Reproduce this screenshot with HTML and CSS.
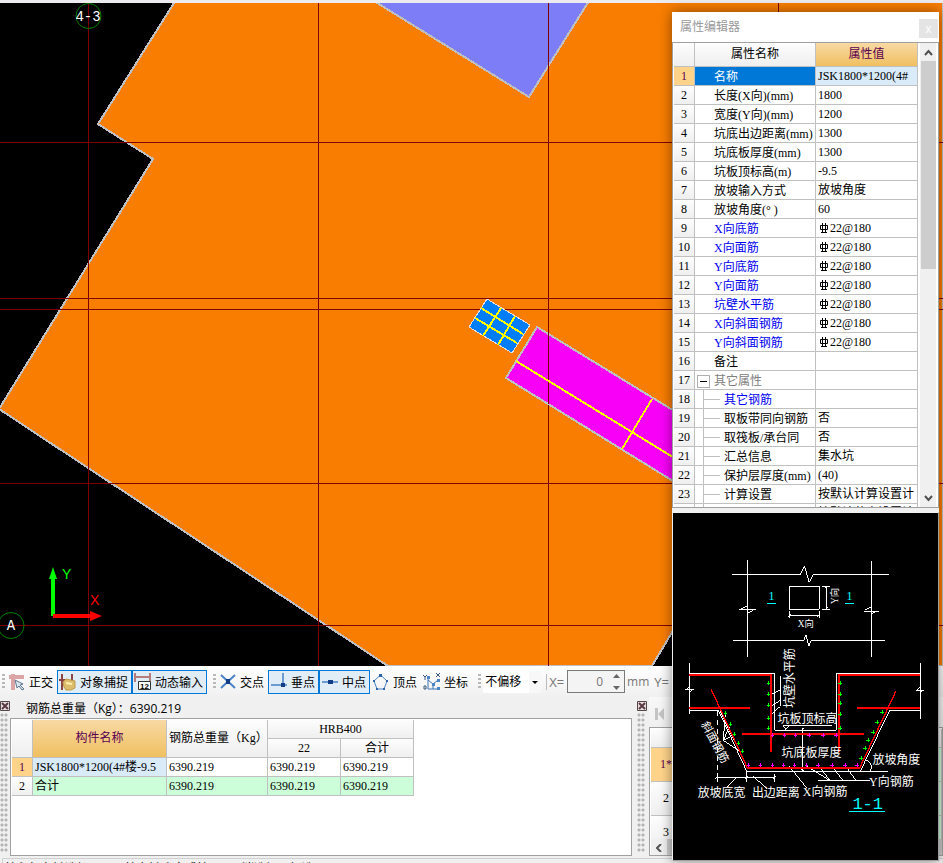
FILE: index.html
```html
<!DOCTYPE html>
<html lang="zh-CN">
<head>
    <meta charset="UTF-8">
    <meta name="viewport" content="width=device-width, initial-scale=1.0">
    <title>属性编辑器</title>
    <link rel="stylesheet" href="styles.css">
</head>
<body>
    <svg width="0" height="0" class="defs">
        <symbol id="rebar" viewBox="0 0 10 10">
            <path d="M1.5 2.5h7v4h-7zM3.500 0v9M6.500 0v9M2 9.500h6" fill="none" stroke="#000"/>
        </symbol>
        <symbol id="close" viewBox="0 0 10 10">
            <path d="M.5.5h9v9h-9z" fill="#e8dede" stroke="#52484c"/>
            <path d="M2 2l6 6M8 2L2 8" stroke="#5a3a42" stroke-width="2"/>
        </symbol>
    </svg>

    <div class="page">
        <div class="canvas">
            <svg class="plan" viewBox="0 3 943 663" preserveAspectRatio="xMinYMin slice">
                <polygon class="slab" points="174,3 98,124 153,159 -1,409 388,666 652,666 690,602 720,666 943,666 943,-2 174,-2"/>
                <polygon class="pit" points="374,1 529,97 589,1"/>
                <!-- axis grid -->
                <path class="axis" d="M88.500 3V666M318.500 3V666M548.500 3V666M778.500 3V666M0 142.500H943M0 298.500H943M0 309.500H943M0 483.500H943M0 625.500H943"/>
                <!-- selected sump -->
                <polygon class="sump" points="487,299 530,325 512,353 469,327"/>
                <path class="mesh" d="M501 308L483 336M515 316L498 345M481 308L523 334M475 318L517 343"/>
                <polygon class="trench" points="537,327 720,439 720,510 506,378"/>
                <path class="axis" d="M548.500 325V404"/>
                <path class="mesh" d="M516 361L720 486M652 399L622 449"/>
                <circle class="bubble" cx="88.500" cy="16" r="12.500"/>
                <text class="bubble-text" x="88" y="21">4-3</text>
                <circle class="bubble" cx="11" cy="625.500" r="13"/>
                <text class="bubble-text" x="11" y="630">A</text>
                <!-- coordinate arrows -->
                <path fill="#00ff00" d="M53 567l4 12h-2v37h-4v-37h-2z"/>
                <path fill="#ff0000" d="M102 616l-12 5v-3H53v-4h37v-3z"/>
                <text class="dir dir-y" x="62" y="579">Y</text>
                <text class="dir dir-x" x="90" y="605">X</text>
            </svg>
        </div>

        <div class="toolbar">
            <span class="grip"></span>
            <button class="tool">
                <svg width="18" height="18"><path d="M1 4h15M5 1v16" stroke="#dba5a5" stroke-width="4"/><path d="M7 7l8 4-3 1 4 4-2 1-3-4-2 2z" fill="#d8e4ee" stroke="#607890"/></svg>
                正交
            </button>
            <button class="tool on">
                <svg width="18" height="18"><path d="M3 1v16M13 1v9M0 7h8" stroke="#8b4545" stroke-width="2"/><path d="M4 9l3-3 9 2v7l-4 2H7l-2-3z" fill="#dcbd6b" stroke="#c09a48"/><path d="M7 10l6 1" stroke="#fff0b0" stroke-width="2"/></svg>
                对象捕捉
            </button>
            <button class="tool on">
                <svg width="18" height="18"><path d="M1 0v9M16 0v9M1 4h15" fill="none" stroke="#b77d7d" stroke-width="2"/><path d="M4.500 8.500h12v8h-12z" fill="#fff" stroke="#333"/><text x="6" y="16" class="tiny">12</text></svg>
                动态输入
            </button>
            <span class="grip wide"></span>
            <button class="tool">
                <svg width="18" height="18"><path d="M2 2l14 13M16 2L2 15" stroke="#4b84c4" stroke-width="2"/><path d="M7 6h4v5H7z" fill="#123c85"/></svg>
                交点
            </button>
            <button class="tool on">
                <svg width="18" height="18"><path d="M1 12h16M13 0v14" stroke="#6b9bd0" stroke-width="2"/><path d="M11 10h4v4h-4z" fill="#123c85"/></svg>
                垂点
            </button>
            <button class="tool on">
                <svg width="18" height="18"><path d="M1 9h16" stroke="#6b9bd0" stroke-width="2"/><path d="M7 7h5v4H7z" fill="#123c85"/></svg>
                中点
            </button>
            <button class="tool">
                <svg width="18" height="18"><path d="M8.500 2L15 8l-3 8H5L2 8z" fill="none" stroke="#4b84c4"/><path d="M7 1h3v3H7zM1 7h2v2H1zM14 7h2v2h-2zM4 15h2v2H4zM11 15h2v2h-2z" fill="#2f65a8"/></svg>
                顶点
            </button>
            <button class="tool">
                <svg width="18" height="18"><path d="M5 4v12h11M5 7l5 4 5-4M10 11v5" fill="none" stroke="#3b74b8"/><path d="M0 2l2 2 2-2M2 4v3M13 0l4 4M17 0l-4 4M1 13h2v3H1z" fill="none" stroke="#39587c"/><path d="M4 3h3v3H4zM9 10h3v3H9zM14 6h3v3h-3zM14 14h3v3h-3z" fill="#4b84c4"/></svg>
                坐标
            </button>
            <span class="grip wide"></span>
            <label class="picker">
                <select aria-label="偏移方式"><option>不偏移</option></select>
            </label>
            <span class="rule"></span>
            <label class="offset" for="offset-x">X=</label>
            <span class="spin">
                <input type="text" id="offset-x" value="0">
                <svg width="7" height="16"><path d="M0 4l3.500-4L7 4zM0 12h7l-3.500 4z" fill="#666"/></svg>
            </span>
            <span class="unit">mm</span>
            <label class="offset" for="offset-y">Y=</label>
            <span class="spin"><input type="text" id="offset-y" value="0"></span>
        </div>

        <div class="docks">
            <div class="handle">
                <svg width="10" height="10"><use href="#close"/></svg>
                <div class="dots"></div>
            </div>
            <div class="summary">
                <p class="total">钢筋总重量（Kg）：6390.219</p>
                <div class="sheet">
                    <table class="grid weights">
                        <colgroup><col class="w-no"><col class="w-name"><col class="w-sum"><col class="w-22"><col class="w-all"></colgroup>
                        <tr>
                            <th rowspan="2"></th>
                            <th rowspan="2" class="picked">构件名称</th>
                            <th rowspan="2" class="sum">钢筋总重量（Kg）</th>
                            <th colspan="2">HRB400</th>
                        </tr>
                        <tr><th>22</th><th>合计</th></tr>
                        <tr><th class="current">1</th><td class="active">JSK1800*1200(4#楼-9.5</td><td>6390.219</td><td>6390.219</td><td>6390.219</td></tr>
                        <tr class="sum-row"><th>2</th><td>合计</td><td>6390.219</td><td>6390.219</td><td>6390.219</td></tr>
                    </table>
                </div>
            </div>
            <div class="handle second">
                <svg width="10" height="10"><use href="#close"/></svg>
                <div class="dots"></div>
            </div>
            <div class="records">
                <div class="nav">
                    <button class="first" aria-label="首条"><svg width="10" height="12"><path d="M0 0h3v12H0zM9 0v12L3 6z" fill="#c4c4c4"/></svg></button>
                </div>
                <div class="sheet">
                    <table class="grid rows">
                        <colgroup><col class="w-row"><col></colgroup>
                        <tr class="head"><th></th><th></th></tr>
                        <tr><th class="current">1*</th><td></td></tr>
                        <tr><th>2</th><td></td></tr>
                        <tr><th>3</th><td></td></tr>
                    </table>
                    <div class="hscroll"><svg width="6" height="8"><path d="M5 0L1 4l4 4" fill="none" stroke="#555" stroke-width="2"/></svg><span></span></div>
                </div>
            </div>
        </div>
        <div class="status">按鼠标左键选择图元，按右键确定或按ESC取消选择；框选图元</div>
    </div>

    <div class="floating">
        <section class="window props">
            <header class="title">
                <h1>属性编辑器</h1>
                <button class="shut">x</button>
            </header>
            <div class="body">
                <div class="clip">
                    <table class="grid">
                        <colgroup><col class="w-idx"><col class="w-prop"><col></colgroup>
                        <tr class="head"><th></th><th>属性名称</th><th class="picked">属性值</th></tr>
                        <tr><th class="current">1</th><td class="name selected">名称</td><td class="active">JSK1800*1200(4#</td></tr>
                        <tr><th>2</th><td class="name">长度(X向)(mm)</td><td>1800</td></tr>
                        <tr><th>3</th><td class="name">宽度(Y向)(mm)</td><td>1200</td></tr>
                        <tr><th>4</th><td class="name">坑底出边距离(mm)</td><td>1300</td></tr>
                        <tr><th>5</th><td class="name">坑底板厚度(mm)</td><td>1300</td></tr>
                        <tr><th>6</th><td class="name">坑板顶标高(m)</td><td>-9.5</td></tr>
                        <tr><th>7</th><td class="name">放坡输入方式</td><td>放坡角度</td></tr>
                        <tr><th>8</th><td class="name">放坡角度(° )</td><td>60</td></tr>
                        <tr><th>9</th><td class="name steel">X向底筋</td><td><svg class="bar"><use href="#rebar"/></svg>22@180</td></tr>
                        <tr><th>10</th><td class="name steel">X向面筋</td><td><svg class="bar"><use href="#rebar"/></svg>22@180</td></tr>
                        <tr><th>11</th><td class="name steel">Y向底筋</td><td><svg class="bar"><use href="#rebar"/></svg>22@180</td></tr>
                        <tr><th>12</th><td class="name steel">Y向面筋</td><td><svg class="bar"><use href="#rebar"/></svg>22@180</td></tr>
                        <tr><th>13</th><td class="name steel">坑壁水平筋</td><td><svg class="bar"><use href="#rebar"/></svg>22@180</td></tr>
                        <tr><th>14</th><td class="name steel">X向斜面钢筋</td><td><svg class="bar"><use href="#rebar"/></svg>22@180</td></tr>
                        <tr><th>15</th><td class="name steel">Y向斜面钢筋</td><td><svg class="bar"><use href="#rebar"/></svg>22@180</td></tr>
                        <tr><th>16</th><td class="name">备注</td><td></td></tr>
                        <tr><th>17</th><td class="name group"><button class="fold" aria-label="折叠"></button>其它属性</td><td></td></tr>
                        <tr><th>18</th><td class="name child steel">其它钢筋</td><td></td></tr>
                        <tr><th>19</th><td class="name child">取板带同向钢筋</td><td>否</td></tr>
                        <tr><th>20</th><td class="name child">取筏板/承台同</td><td>否</td></tr>
                        <tr><th>21</th><td class="name child">汇总信息</td><td>集水坑</td></tr>
                        <tr><th>22</th><td class="name child">保护层厚度(mm)</td><td>(40)</td></tr>
                        <tr><th>23</th><td class="name child">计算设置</td><td>按默认计算设置计</td></tr>
                        <tr><th></th><td class="name child"></td><td>按默认节点设置计</td></tr>
                    </table>
                </div>
                <div class="vscroll">
                    <svg width="9" height="7"><path d="M1 6l3.500-4L8 6" fill="none" stroke="#505050" stroke-width="2"/></svg>
                    <span class="thumb"></span>
                    <svg width="9" height="7"><path d="M1 1l3.500 4L8 1" fill="none" stroke="#505050" stroke-width="2"/></svg>
                </div>
            </div>
        </section>

        <section class="window sketch">
            <!-- three units to a pixel -->
            <svg class="section" viewBox="9 9 796 1042" preserveAspectRatio="xMinYMin meet">
                <g class="white">
                    <!-- plan -->
                    <path d="M186 193H392l12-24 14 48 13-24H657M189 391H402l7-16 8 35 7-19H645M232 150V443M604 153V443"/>
                    <path d="M207 300h50M214 297l18-8v22l18-9M582 304h47M586 301l18-10v22l18-9M358 229h90v69h-90zM456 229h24M456 298h24M469 229v69M358 304v20M448 304v20M358 316h90"/>
                    <path d="M465 236l8-8M465 300l8-8M355 320l8-8M444 320l8-8"/>
                    <!-- outline of the pit -->
                    <path d="M58 460V614M751 460V629M58 490H314V661H500V490H751M58 601H145L230 784H654M572 784L660 601H751M46 540h26M50 538l8-5v14l8-5M738 541h26M743 539l8-6v14l8-5"/>
                    <path d="M142 604V790" stroke-dasharray="15 12"/>
                    <path d="M142 790v28M230 784v32M314 792v24M142 804H314M136 808l10-10M225 808l10-10M309 808l10-10"/>
                    <path d="M398 656V786M392 662l10-8M392 780l10 6M340 647H486M340 647l8 13 9-13"/>
                    <!-- leaders -->
                    <path d="M331 500V590L303 616M331 541l-28 14M331 572l-28 17M160 692L166 612M160 692L178 652M160 692L190 676M160 692L206 722M150 604L206 720M172 832l28-28M290 836l-40-36M410 834l-52-65M444 814H600M482 814l-73-46M482 814l-37-46M520 814l-34-46M560 814l-35-48M590 751q22 13 12 33"/>
                </g>
                <g class="red">
                    <path d="M58 497H303V728M750 497H507V728M58 594H240M561 594H750M216 672H582M232 774H570"/>
                    <path class="slope" d="M123 537L232 774M679 543L570 774"/>
                </g>
                <path class="green" d="M290 520h11M290 553h11M290 586h11M290 625h11M290 655h11M506 520h11M506 553h11M506 580h11M506 613h11M506 655h11M161 610h11M176 643h11M188 673h11M200 700h11M212 724h11M632 607h11M617 637h11M605 667h11M590 691h11M581 715h11M569 745h11M296 515v11M296 548v11M296 581v11M296 620v11M296 650v11M512 515v11M512 548v11M512 575v11M512 608v11M512 650v11M167 605v11M182 638v11M194 668v11M206 695v11M218 719v11M638 602v11M623 632v11M611 662v11M596 686v11M587 710v11M575 740v11"/>
                <path class="pink" d="M302 676h11M338 676h11M371 676h11M413 676h11M455 676h11M494 676h11M230 766h11M266 766h11M302 766h11M335 766h11M368 766h11M404 766h11M440 766h11M482 766h11M521 766h11M557 766h11M308 671v11M344 671v11M377 671v11M419 671v11M461 671v11M500 671v11M236 761v11M272 761v11M308 761v11M341 761v11M374 761v11M410 761v11M446 761v11M488 761v11M527 761v11M563 761v11"/>
                <g class="note">
                    <text x="323" y="639">坑板顶标高</text>
                    <text x="335" y="743">坑底板厚度</text>
                    <text x="608" y="764">放坡角度</text>
                    <text x="598" y="828">Y向钢筋</text>
                    <text x="399" y="858">X向钢筋</text>
                    <text x="83" y="863">放坡底宽</text>
                    <text x="246" y="863">出边距离</text>
                    <text transform="translate(373 595) rotate(-90)">坑壁水平筋</text>
                    <text class="small" x="384" y="352">X向</text>
                    <text class="small" transform="translate(505 282) rotate(-90)">Y向</text>
                    <text class="slant" transform="translate(93 643) rotate(62)">斜面钢筋</text>
                </g>
                <g class="cyan">
                    <text class="mark" x="296" y="270">1</text>
                    <text class="mark" x="530" y="270">1</text>
                    <text class="cut" x="548" y="897">1-1</text>
                    <path d="M291 280h27M525 280h27M537 907h108"/>
                </g>
            </svg>
        </section>
    </div>
</body>
</html>
```
FILE: styles.css
```css
* {
    box-sizing: border-box;
}

body {
    margin: 0;
    font-family: "Open Sans", "Noto Sans CJK SC", sans-serif;
    font-size: 12px;
    color: #000;
    background-color: #f0f0f0;
    overflow: hidden;
}

button {
    font: inherit;
    border: none;
    background: none;
    padding: 0;
}

.defs {
    position: absolute;
}

.page {
    display: flex;
    flex-direction: column;
    height: 100vh;
}

/* drawing area */
.canvas {
    flex: 1;
    min-height: 0;
    border-top: 3px solid #ececf0;
    background-color: #000;
}

.plan {
    display: block;
    width: 100%;
    height: 100%;
}

.slab {
    fill: #f87d00;
    stroke: #c0c0c0;
    stroke-width: 2;
}

.pit {
    fill: #7d7df8;
    stroke: #c0c0c0;
    stroke-width: 2;
}

.axis {
    fill: none;
    stroke: #7c0000;
}

.sump {
    fill: #007df8;
    stroke: #e0e0e0;
}

.trench {
    fill: #f800f8;
    stroke: #c0c0c0;
    stroke-width: 2;
}

.slab,
.pit,
.axis,
.sump,
.trench,
.mesh {
    shape-rendering: crispEdges;
}

.mesh {
    fill: none;
    stroke: #ffff00;
    stroke-width: 2;
}

.bubble {
    fill: none;
    stroke: #008000;
}

.bubble-text {
    font: 14px "Liberation Mono", monospace;
    fill: #fff;
    text-anchor: middle;
}

.dir {
    font: 14px "Liberation Sans", sans-serif;
}

.dir-y {
    fill: #00ff00;
}

.dir-x {
    fill: #ff0000;
}

/* snap toolbar */
.toolbar {
    display: flex;
    align-items: center;
    height: 31px;
    background: linear-gradient(#fff, #f0f0f0);
    overflow: hidden;
}

.toolbar > * {
    flex-shrink: 0;
}

.grip {
    width: 3px;
    height: 15px;
    margin: 0 1px 0 2px;
    background: repeating-linear-gradient(#b8b8b8 0 2px, transparent 2px 4px);
}

.grip.wide {
    margin: 0 1px 0 6px;
}

.tool {
    display: flex;
    align-items: center;
    gap: 3px;
    height: 24px;
    padding: 0 3px 0 1px;
    border: 1px solid transparent;
    white-space: nowrap;
}

.tool.on {
    border-color: #0078d7;
    background-color: #e0ecf6;
}

.tiny {
    font: bold 8px "Liberation Sans", sans-serif;
}

.picker {
    position: relative;
    margin-left: 1px;
}

.picker select {
    width: 58px;
    height: 22px;
    padding: 0 0 0 2px;
    border: none;
    appearance: none;
    background: linear-gradient(90deg, #fff 46px, #f8f8f8 46px);
    font: inherit;
}

.picker::after {
    content: "";
    position: absolute;
    right: 3px;
    top: 10px;
    border: 3px solid transparent;
    border-top-color: #000;
}

.rule {
    width: 1px;
    height: 16px;
    margin: 0 2px 0 5px;
    background-color: #bbb;
}

.offset {
    color: #777;
    font-size: 13px;
    margin-right: 3px;
}

.unit {
    color: #777;
    margin: 0 5px 0 2px;
}

.spin {
    display: flex;
    align-items: center;
    width: 58px;
    height: 23px;
    padding-right: 4px;
    border: 1px solid #7a7a7a;
    background-color: #f4f4f4;
}

.spin input {
    flex: 1;
    min-width: 0;
    border: none;
    background: none;
    text-align: right;
    color: #777;
    font: inherit;
    padding: 0 10px 0 0;
}

/* lower docks */
.docks {
    display: flex;
    height: 160px;
}

.handle {
    width: 10px;
    padding-top: 4px;
    display: flex;
    flex-direction: column;
    gap: 2px;
}

.handle.second {
    margin: 0 2px 0 5px;
}

.dots {
    width: 8px;
    height: 140px;
    background: radial-gradient(circle at 2px 2px, #b4b4b4 1px, transparent 2px) 0 0 / 4px 5px;
}

.summary {
    flex: 1 1 622px;
    min-width: 0;
    display: flex;
    flex-direction: column;
}

.total {
    margin: 0;
    padding-left: 16px;
    height: 21px;
    line-height: 23px;
}

.sheet {
    flex: 1;
    border: 1px solid #a0a0a0;
    padding: 1px 0 0 1px;
    background-color: #fff;
    overflow: hidden;
    margin-bottom: 1px;
}

.records {
    flex: 0 1 294px;
    display: flex;
    flex-direction: column;
}

.nav {
    height: 30px;
    padding: 10px 6px;
    background: linear-gradient(#f8f8f8, #f0f0f0);
}

.first {
    display: block;
}

.records .sheet {
    display: flex;
    flex-direction: column;
}

.hscroll {
    display: flex;
    align-items: center;
    gap: 5px;
    height: 17px;
    padding-left: 5px;
    background-color: #f0f0f0;
}

.hscroll span {
    flex: 1;
    height: 17px;
    background-color: #cdcdcd;
}

.status {
    height: 5px;
    margin: 1px 0 0 2px;
    border: 1px solid #d0d0d0;
    border-width: 1px 0 0 1px;
    padding-left: 2px;
    line-height: 20px;
    white-space: nowrap;
    overflow: hidden;
}

/* grids */
.grid {
    table-layout: fixed;
    border-collapse: separate;
    border-spacing: 0;
    width: 100%;
    font-family: "Liberation Serif", "Noto Sans CJK SC", serif;
    font-size: 12px;
}

.grid th,
.grid td {
    height: 19px;
    padding: 0 0 0 2px;
    border: 1px solid #c0c0c0;
    border-width: 0 1px 1px 0;
    line-height: 17px;
    font-weight: normal;
    white-space: nowrap;
    overflow: hidden;
}

.grid th {
    padding: 0;
    background: linear-gradient(#fdfdfd, #efefef);
    text-align: center;
}

.grid .picked {
    background: linear-gradient(#f8d9a4, #f0c060);
    color: #5a0050;
}

.grid .current {
    background: #ffd48a;
    color: #5a0050;
}

.grid .active {
    background-color: #d9eaf9;
}

.grid.weights {
    width: 402px;
}

.weights .sum {
    text-align: left;
    padding-left: 2px;
}

.sum-row td {
    background-color: #ccffd9;
}

.w-no {
    width: 21px;
}

.w-name {
    width: 134px;
}

.w-sum {
    width: 101px;
}

.w-22,
.w-all {
    width: 73px;
}

.w-row {
    width: 31px;
}

.grid.rows {
    flex: 1;
    min-height: 0;
    margin-bottom: -11px;
}

.rows th,
.rows td {
    height: 34px;
}

.rows tr.head th {
    height: 19px;
}

.rows td {
    background-color: #ccffd9;
}

.rows + .hscroll {
    position: relative;
    flex-shrink: 0;
}

/* floating windows over the drawing */
.floating {
    position: absolute;
    top: 12px;
    right: 4px;
    bottom: 2px;
    width: 267px;
    display: flex;
    flex-direction: column;
    box-shadow: 0 0 12px rgba(0, 0, 0, 0.45);
}

.props {
    height: 500px;
    display: flex;
    flex-direction: column;
    background-color: #f0f0f0;
}

.title {
    display: flex;
    justify-content: space-between;
    height: 30px;
    padding-left: 8px;
    background-color: #fff;
}

.title h1 {
    margin: 0;
    font-size: 12px;
    font-weight: normal;
    line-height: 30px;
    color: #999;
}

.shut {
    width: 19px;
    height: 19px;
    margin: 7px 1px 0 0;
    background-color: #e4e4e4;
    color: #fff;
    line-height: 17px;
}

.body {
    display: flex;
    gap: 2px;
    height: 466px;
    padding: 0 2px 0 1px;
    border: 1px solid #a0a0a0;
    background-color: #fff;
}

.clip {
    flex: 1;
    overflow: hidden;
}

.props .head th {
    height: 24px;
}

.w-idx {
    width: 21px;
}

.w-prop {
    width: 121px;
}

.grid .name {
    padding: 2px 0 0 19px;
    line-height: 16px;
}

.grid .selected {
    background-color: #0078d7;
    color: #fff;
}

.grid .steel {
    color: #0000f0;
}

.grid .group {
    padding-left: 2px;
    color: #808080;
}

.grid .child {
    padding-left: 29px;
    background:
        linear-gradient(#c0c0c0, #c0c0c0) 8px 0 / 1px 100% no-repeat,
        linear-gradient(#c0c0c0, #c0c0c0) 8px 9px / 17px 1px no-repeat;
}

.fold {
    width: 13px;
    height: 13px;
    margin-right: 4px;
    border: 1px solid #b0b0b0;
    background: linear-gradient(#000, #000) center / 7px 1px no-repeat;
    vertical-align: -2px;
}

.bar {
    width: 10px;
    height: 10px;
    margin: 0 1px 0 1px;
    vertical-align: -1px;
}

.vscroll {
    display: flex;
    flex-direction: column;
    align-items: center;
    width: 16px;
    padding: 6px 0 5px;
    background-color: #f0f0f0;
}

.thumb {
    width: 15px;
    height: 208px;
    margin: 5px 0 auto;
    background-color: #cdcdcd;
}

.sketch {
    flex: 1;
    min-height: 0;
    border: 1px solid #f0f0f0;
    border-right-color: #a0a0a0;
    border-bottom-color: #a0a0a0;
    background-color: #000;
}

.section {
    display: block;
    width: 100%;
    height: 100%;
}

.section path {
    fill: none;
    stroke-width: 3;
    shape-rendering: crispEdges;
}

.section .white path {
    stroke: #fff;
}

.section .red path {
    stroke: #ff0000;
    stroke-width: 6;
}

.section .red .slope {
    stroke-width: 4;
}

.section .green {
    stroke: #00ff00;
}

.section .pink {
    stroke: #ff00ff;
}

.section .cyan path {
    stroke: #00ffff;
}

.note {
    font: 36px "Liberation Serif", "Noto Sans CJK SC", serif;
    fill: #fff;
}

.note .small {
    font-size: 28px;
}

.note .slant {
    font-size: 34px;
}

.cyan {
    fill: #00ffff;
}

.mark {
    font: 36px "Liberation Serif", serif;
}

.cut {
    font: 51px "Liberation Mono", monospace;
}
```
